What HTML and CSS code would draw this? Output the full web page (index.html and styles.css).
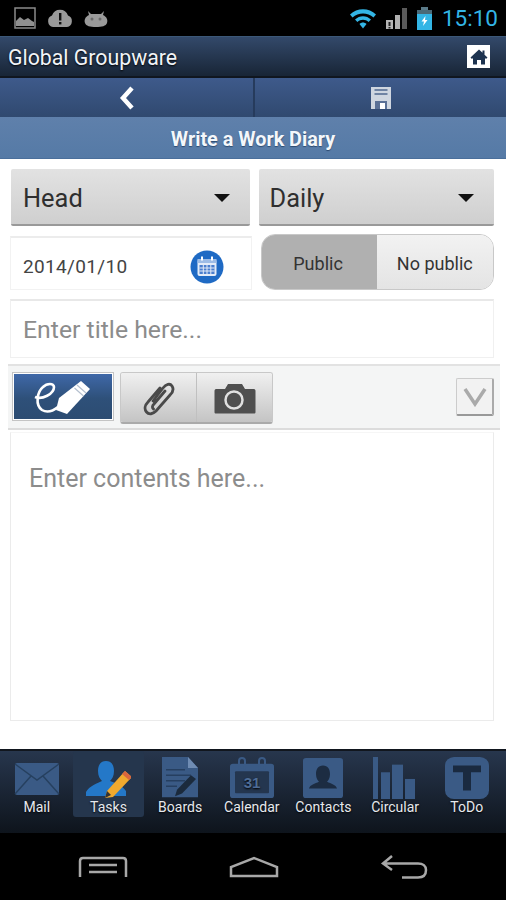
FILE: index.html
```html
<!DOCTYPE html>
<html>
<head>
    <title>Global Groupware</title>
    <link rel="stylesheet" href="styles.css">
</head>
<body>
    <div class="status-bar">
        <div class="status-left">
            <svg width="24" height="24" viewBox="0 0 24 24"><rect x="2" y="2" width="20" height="20" fill="none" stroke="#8a8a8a" stroke-width="1.5"/><path d="M3 20V15L7 11L11 14L15 12L19 15L21 16V20Z" fill="#8f8f8f"/></svg>
            <svg width="28" height="24" viewBox="0 0 28 24"><path d="M7 21A6 6 0 0 1 6 9.5A8.5 8.5 0 0 1 22 9.5A6 6 0 0 1 21 21Z" fill="#9a9a9a"/><rect x="13" y="7" width="2.4" height="7.5" fill="#111"/><rect x="13" y="16" width="2.4" height="2.4" fill="#111"/></svg>
            <svg width="26" height="24" viewBox="0 0 26 24"><path d="M5 5L8 8H18L21 5L20 9C24 11 25 14 24 17C23 20 19 21 13 21C7 21 3 20 2 17C1 14 2 11 6 9Z" fill="#9a9a9a"/><circle cx="9" cy="13" r="1.5" fill="#6a6a6a"/><circle cx="17" cy="13" r="1.5" fill="#6a6a6a"/></svg>
        </div>
        <div class="status-right">
            <svg width="28" height="24" viewBox="0 0 28 24"><path d="M1 8.5C8 1.5 20 1.5 27 8.5L24.5 11.5C18.5 6 9.5 6 3.5 11.5Z" fill="#33b5e5"/><path d="M6 13.5C10.5 9 17.5 9 22 13.5L19.6 16C16.5 13 11.5 13 8.4 16Z" fill="#33b5e5"/><path d="M10.5 18C12.5 16 15.5 16 17.5 18L14 22.5Z" fill="#33b5e5"/></svg>
            <svg class="signal" width="24" height="24" viewBox="0 0 24 24"><rect x="1" y="14" width="7" height="9" fill="#b5b5b5"/><rect x="3.5" y="16" width="2" height="4" fill="#222"/><rect x="3.5" y="21" width="2" height="1.5" fill="#222"/><rect x="10" y="9" width="5" height="14" fill="#b0b0b0"/><rect x="17" y="2" width="5" height="21" fill="#5a5a5a"/></svg>
            <svg class="battery" width="15" height="24" viewBox="0 0 15 24"><rect x="4" y="1" width="7" height="3" fill="#5a7a88"/><rect x="0" y="4" width="15" height="20" fill="#33b5e5"/><rect x="0" y="4" width="15" height="4" fill="#4a6a78"/><path d="M8.5 10L4.5 15.5H7L6 20L10.5 14H8Z" fill="#fff"/></svg>
            <span class="clock">15:10</span>
        </div>
    </div>

    <div class="app-header">
        <span class="app-name">Global Groupware</span>
        <div class="home-btn">
            <svg width="20" height="20" viewBox="0 0 20 20"><path d="M10 2.5L1.5 10.5L3 12L4 11V17.5H8V13H12V17.5H16V11L17 12L18.500 10.5L15.500 7.700V3.500H13.500V5.800Z" fill="#1d3350"/></svg>
        </div>
    </div>

    <div class="toolbar">
        <div class="toolbar-btn toolbar-back">
            <svg width="18" height="26" viewBox="0 0 18 26"><path d="M14 3L5 13L14 23" fill="none" stroke="#fff" stroke-width="4.500"/></svg>
        </div>
        <div class="toolbar-btn">
            <svg width="22" height="24" viewBox="0 0 22 24"><path d="M1 1H21V23H1Z" fill="#cfd6e0"/><rect x="4.500" y="3" width="13" height="2" fill="#6f83a3"/><rect x="4.500" y="7" width="13" height="2" fill="#6f83a3"/><rect x="5" y="15" width="12" height="8" fill="#5a7096"/><rect x="10" y="17" width="5" height="6" fill="#fff"/></svg>
        </div>
    </div>

    <div class="page-title">Write a Work Diary</div>

    <div class="content">
        <div class="row">
            <div class="select">
                <span>Head</span>
                <span class="caret"></span>
            </div>
            <div class="select select-right">
                <span>Daily</span>
                <span class="caret"></span>
            </div>
        </div>

        <div class="row row-date">
            <div class="date-field">
                <span class="date-value">2014/01/10</span>
                <svg width="34" height="34" viewBox="0 0 34 34"><circle cx="17" cy="17" r="16.500" fill="#1f6ac4"/><rect x="7.500" y="9" width="19" height="17" rx="2" fill="#e4ecf8"/><rect x="7.500" y="9" width="19" height="4" fill="#9dbce6"/><rect x="11" y="6.500" width="2" height="4" fill="#fff"/><rect x="21" y="6.500" width="2" height="4" fill="#fff"/><path d="M9.500 15H24.500V24H9.500Z" fill="#4b7fce"/><path d="M9.500 18H24.500M9.500 21H24.500M13.300 15V24M17 15V24M20.800 15V24" stroke="#e4ecf8" stroke-width="1"/></svg>
            </div>
            <div class="toggle">
                <div class="toggle-on">Public</div>
                <div class="toggle-off">No public</div>
            </div>
        </div>

        <div class="title-field">Enter title here...</div>

        <div class="tool-row">
            <div class="tool-write">
                <svg width="72" height="44" viewBox="0 0 72 44"><path d="M8 22C15 25 27 19 27 12C27 8 20 8 16 12C10 17 8 30 15 35C20 38 26 36 31 32" fill="none" stroke="#fff" stroke-width="2.600"/><path d="M54 6L63 14L40 39L29 35L32 23Z" fill="#fff"/><path d="M50 10L59 18M47.500 13L56.500 21" stroke="#b4bfce" stroke-width="1.200"/></svg>
            </div>
            <div class="tool-group">
                <div class="tool-btn tool-clip">
                    <svg width="32" height="36" viewBox="0 0 32 36"><path d="M10 21L20 8C23 4 27 3 29 6C31 9 30 12 27 15L13 31C10 34 6 35 3.500 32C1 29 2 25 5 22L17 8M22 11L11 24C9 26 9 28 10.500 29" fill="none" stroke="#4a4a4a" stroke-width="2.800" stroke-linecap="round"/></svg>
                </div>
                <div class="tool-btn tool-camera">
                    <svg width="42" height="32" viewBox="0 0 42 32"><path d="M2 7H11L14 2H28L31 7H40C41 7 41.500 8 41.500 9V30C41.500 31 41 31.500 40 31.500H2C1 31.500 .5 31 .5 30V9C.5 8 1 7 2 7Z" fill="#4f4f4f"/><circle cx="20" cy="18" r="8.500" fill="none" stroke="#e0e0e0" stroke-width="2.500"/></svg>
                </div>
            </div>
            <div class="tool-collapse">
                <svg width="24" height="20" viewBox="0 0 24 20"><path d="M2 2L12 17L22 2" fill="none" stroke="#aaa" stroke-width="3.500"/></svg>
            </div>
        </div>

        <div class="body-field">Enter contents here...</div>
    </div>

    <div class="tab-bar">
        <div class="tab tab-mail">
            <svg width="46" height="34" viewBox="0 0 46 34"><rect x="1" y="1" width="44" height="32" rx="2" fill="#3a5a85"/><path d="M1 2L23 18L45 2M1 32L17 14M45 32L29 14" fill="none" stroke="#26405f" stroke-width="1.500"/></svg>
            <span>Mail</span>
        </div>
        <div class="tab tab-active">
            <svg width="46" height="40" viewBox="0 0 46 40"><path d="M21 2C27 2 29 7 29 12C29 17 27 20 25 22C30 24 37 26 41 32V37H1V33C4 27 13 24 17 22C15 20 13 17 13 12C13 7 15 2 21 2Z" fill="#2478c8"/><path d="M40 12L47 18L28 38L20 39L22 32Z" fill="#f0a92e"/><path d="M40 12L47 18L44 21L37 15Z" fill="#d9663e"/><path d="M20 39L22 32L26 36Z" fill="#333"/></svg>
            <span>Tasks</span>
        </div>
        <div class="tab">
            <svg width="38" height="42" viewBox="0 0 38 46" preserveAspectRatio="none"><path d="M1 0H27L37 12V44H1Z" fill="#3a5a85"/><path d="M27 0V12H37Z" fill="#6f8cb3"/><path d="M5 14H24M5 20H30M5 26H24M5 32H16" stroke="#263f60" stroke-width="1.500"/><path d="M30 20L35 24L21 40L14 43L16 36Z" fill="#1b2a3c"/></svg>
            <span>Boards</span>
        </div>
        <div class="tab">
            <svg width="46" height="42" viewBox="0 0 46 44" preserveAspectRatio="none"><rect x="1" y="7" width="44" height="36" rx="3" fill="#3a5a85"/><rect x="6" y="15" width="34" height="23" rx="1" fill="#24364f"/><rect x="10" y="1" width="6" height="12" rx="3" fill="none" stroke="#3a5a85" stroke-width="2"/><rect x="30" y="1" width="6" height="12" rx="3" fill="none" stroke="#3a5a85" stroke-width="2"/><text x="23" y="33" font-family="Liberation Sans" font-size="15" font-weight="bold" fill="#4e6c96" text-anchor="middle">31</text></svg>
            <span>Calendar</span>
        </div>
        <div class="tab">
            <svg width="42" height="42" viewBox="0 0 42 44" preserveAspectRatio="none"><rect x="1" y="1" width="40" height="42" rx="3" fill="#3a5a85"/><path d="M21 9C26 9 28 13 28 18C28 22 26 25 25 26C29 28 34 29 35 33H7C8 29 13 28 17 26C16 25 14 22 14 18C14 13 16 9 21 9Z" fill="#1c2c42"/></svg>
            <span>Contacts</span>
        </div>
        <div class="tab">
            <svg width="46" height="42" viewBox="0 0 46 44" preserveAspectRatio="none"><rect x="1" y="0" width="5" height="44" fill="#3a5a85"/><rect x="9" y="16" width="9" height="28" fill="#3a5a85"/><rect x="20" y="8" width="11" height="36" fill="#3a5a85"/><rect x="33" y="23" width="10" height="21" fill="#3a5a85"/></svg>
            <span>Circular</span>
        </div>
        <div class="tab">
            <svg width="44" height="42" viewBox="0 0 44 44" preserveAspectRatio="none"><rect x="0" y="0" width="44" height="44" rx="9" fill="#3a5a85"/><path d="M8 9H36V16H26V35H18V16H8Z" fill="#1a2a40"/></svg>
            <span>ToDo</span>
        </div>
    </div>

    <div class="nav-bar">
        <svg width="50" height="22" viewBox="0 0 50 22"><path d="M2 21V5C2 3 3 2 5 2H45C47 2 48 3 48 5V21M11 9H39M11 16H39" fill="none" stroke="#a8a8a8" stroke-width="2.500"/></svg>
        <svg width="50" height="22" viewBox="0 0 50 22"><path d="M2 20V11L25 2L48 11V20Z" fill="none" stroke="#a8a8a8" stroke-width="2.500"/></svg>
        <svg width="48" height="26" viewBox="0 0 48 26"><path d="M12 2L3 9.500L12 16M3 9.500H38C43 9.500 46 12 46 16C46 21 43 23.500 38 23.500H22" fill="none" stroke="#a8a8a8" stroke-width="2.500"/></svg>
    </div>
</body>
</html>
```

FILE: styles.css
```css
body {
    font-family: Roboto, "Liberation Sans", sans-serif;
    margin: 0;
    width: 506px;
    height: 900px;
    display: flex;
    flex-direction: column;
    background-color: #fff;
    overflow: hidden;
}
svg {
    display: block;
    flex-shrink: 0;
}

.status-bar {
    height: 36px;
    background-color: #000;
    display: flex;
    justify-content: space-between;
    align-items: center;
    padding: 0 8px 0 13px;
}
.status-left,
.status-right {
    display: flex;
    align-items: center;
}
.status-left {
    gap: 9px;
}
.status-right {
    gap: 8px;
}
.clock {
    color: #33b5e5;
    font-size: 22.5px;
    margin-left: 2px;
}

.app-header {
    height: 42px;
    box-sizing: border-box;
    border-top: 1px solid #3c5878;
    border-bottom: 2px solid #10161f;
    background: linear-gradient(#33496a, #182536);
    display: flex;
    justify-content: space-between;
    align-items: center;
    padding: 2px 16px 0 8px;
}
.app-name {
    color: #f1f4f8;
    font-size: 21.3px;
    text-shadow: 0 1px 2px #000;
}
.home-btn {
    width: 23px;
    height: 23px;
    margin-top: -2px;
    background-color: #fff;
    display: flex;
    justify-content: center;
    align-items: center;
}

.toolbar {
    height: 39px;
    display: flex;
    background: linear-gradient(#3e5a8b, #30496f);
}
.toolbar-btn {
    flex: 1;
    display: flex;
    justify-content: center;
    align-items: center;
}
.toolbar-back {
    flex: none;
    width: 255px;
    box-sizing: border-box;
    border-right: 2px solid #263b5c;
}

.page-title {
    height: 42px;
    box-sizing: border-box;
    padding-top: 3px;
    background: linear-gradient(#5f80ab, #557aa6);
    border-bottom: 1px solid #4a6f9b;
    color: #f4f7fb;
    font-size: 19.8px;
    font-weight: bold;
    display: flex;
    justify-content: center;
    align-items: center;
    text-shadow: 0 1px 1px #2c4a70;
}

.content {
    flex: 1;
    display: flex;
    flex-direction: column;
    padding: 10px 12px 0 10px;
}
.row {
    display: flex;
}
.select {
    width: 240px;
    height: 57px;
    box-sizing: border-box;
    margin-left: 1px;
    padding: 2px 20px 0 12px;
    background: linear-gradient(#e2e2e2, #cfcfcf);
    border-bottom: 2px solid #999;
    border-radius: 2px;
    color: #2f2f2f;
    font-size: 25.4px;
    display: flex;
    justify-content: space-between;
    align-items: center;
}
.select-right {
    width: 237px;
    margin-left: 9px;
    padding-left: 11px;
}
.caret {
    width: 0;
    height: 0;
    border-left: 8px solid transparent;
    border-right: 8px solid transparent;
    border-top: 8px solid #111;
}

.row-date {
    margin-top: 8px;
    height: 56px;
}
.date-field {
    width: 242px;
    height: 54px;
    margin-top: 2px;
    box-sizing: border-box;
    padding: 6px 27px 0 12px;
    border: 1px solid #f2f2f2;
    border-top: 2px solid #ececec;
    display: flex;
    justify-content: space-between;
    align-items: center;
}
.date-value {
    color: #444;
    font-size: 19px;
    letter-spacing: 0.35px;
}
.toggle {
    width: 234px;
    height: 56px;
    margin-left: 9px;
    box-sizing: border-box;
    border: 1px solid #c8c8c8;
    border-radius: 14px;
    overflow: hidden;
    display: flex;
    font-size: 18px;
    color: #333;
}
.toggle-on {
    width: 115px;
    padding: 2px 2px 0 0;
    box-sizing: border-box;
    background-color: #b0b0b0;
    display: flex;
    justify-content: center;
    align-items: center;
}
.toggle-off {
    flex: 1;
    padding-top: 2px;
    background: linear-gradient(#f2f2f2, #e4e4e4);
    display: flex;
    justify-content: center;
    align-items: center;
}

.title-field {
    height: 59px;
    margin-top: 9px;
    box-sizing: border-box;
    padding-left: 12px;
    border: 1px solid #f0f0f0;
    border-top: 2px solid #e8e8e8;
    color: #8c8c8c;
    font-size: 24.8px;
    display: flex;
    align-items: center;
}

.tool-row {
    height: 66px;
    margin: 6px -12px 0 -2px;
    width: 492px;
    box-sizing: border-box;
    padding: 6px 6px 0 4px;
    background-color: #f4f5f5;
    border-top: 2px solid #e2e2e2;
    border-bottom: 2px solid #dcdcdc;
    display: flex;
    align-items: flex-start;
}
.tool-write {
    width: 98px;
    height: 45px;
    margin: 1px 0 0 1px;
    background: linear-gradient(#3f68a8, #2e5079 55%, #2c4c72);
    border: 1px solid #fff;
    outline: 1px solid #c4c4c4;
    display: flex;
    justify-content: center;
    align-items: center;
}
.tool-group {
    margin-left: 7px;
    display: flex;
    height: 52px;
    border: 1px solid #c8c8c8;
    border-bottom: 2px solid #aaa;
    border-radius: 3px;
    box-sizing: border-box;
    overflow: hidden;
}
.tool-btn {
    background: linear-gradient(#f0f0f0, #c4c4c4);
    display: flex;
    justify-content: center;
    align-items: center;
}
.tool-clip {
    width: 75px;
    border-right: 1px solid #c0c0c0;
}
.tool-camera {
    width: 75px;
}
.tool-collapse {
    width: 38px;
    height: 38px;
    margin: 6px 0 0 auto;
    box-sizing: border-box;
    background-color: #f2f2f2;
    border: 1px solid #ccc;
    border-bottom: 2px solid #999;
    border-right: 2px solid #aaa;
    border-radius: 2px;
    display: flex;
    justify-content: center;
    align-items: center;
}

.body-field {
    height: 289px;
    margin-top: 2px;
    box-sizing: border-box;
    padding: 31px 0 0 18px;
    border: 1px solid #ebebeb;
    border-top-color: #f6f6f6;
    color: #8c8c8c;
    font-size: 25px;
}

.tab-bar {
    height: 84px;
    box-sizing: border-box;
    border-top: 2px solid #11161e;
    background: linear-gradient(#27364d, #0e141c);
    display: flex;
    padding: 0 1px;
}
.tab {
    width: 71.67px;
    height: 66px;
    display: flex;
    flex-direction: column;
    align-items: center;
    justify-content: flex-end;
    color: #e6e9ee;
    font-size: 14px;
    text-shadow: 0 1px 2px #000;
    box-sizing: border-box;
    padding-bottom: 2px;
}
.tab-mail svg {
    margin-bottom: 3px;
}
.tab-active {
    background-color: #25364d;
    border-radius: 3px;
}

.nav-bar {
    height: 67px;
    background-color: #000;
    display: flex;
    justify-content: space-between;
    align-items: center;
    padding: 0 78px 0 78px;
}
```
